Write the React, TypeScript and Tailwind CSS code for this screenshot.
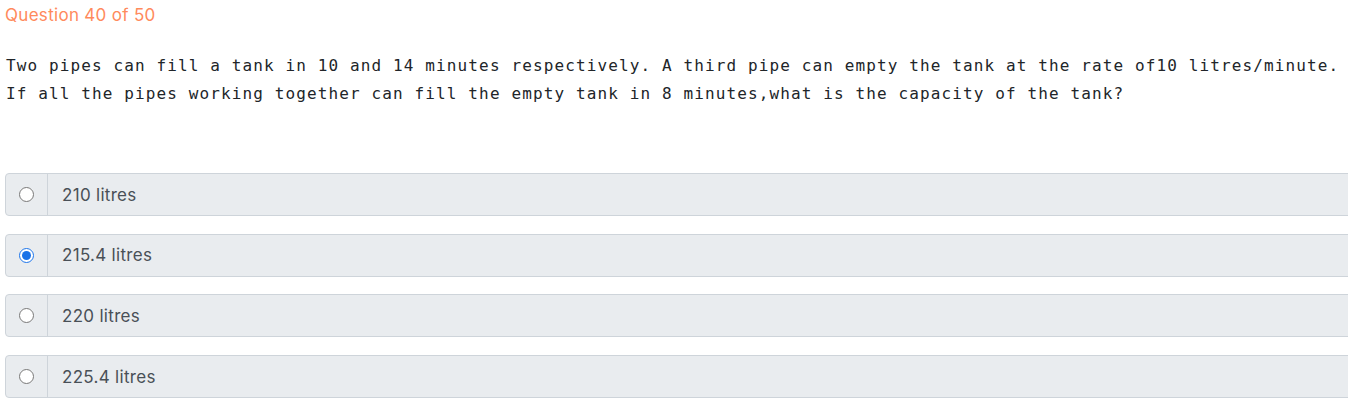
import { useState } from "react";

const options = ["210 litres", "215.4 litres", "220 litres", "225.4 litres"];

const App = () => {
  const [picked, setPicked] = useState(1);

  return (
    <div className="w-full h-[416px] overflow-hidden bg-white font-['Inter',sans-serif]">
      <div className="pl-[5px] pt-[5px]">
        <p className="text-[17px] leading-[21px] text-[#ff8a5c] tracking-[0.3px]">
          Question 40 of 50
        </p>

        <div className="mt-[26px] pl-[1px] font-['DejaVu_Sans_Mono',monospace] text-[16px] leading-[28px] tracking-[1.12px] text-[#212529] whitespace-nowrap">
          <p>
            Two pipes can fill a tank in 10 and 14 minutes respectively. A third pipe can empty the tank at the rate of10 litres/minute.
          </p>
          <p>If all the pipes working together can fill the empty tank in 8 minutes,what is the capacity of the tank?</p>
        </div>

        <div className="mt-[65px] flex flex-col gap-[17.6px] w-[1380px]">
          {options.map((opt, i) => (
            <label
              key={opt}
              className="flex h-[43px] border border-[#ced4da] rounded-[4px] bg-[#e9ecef] cursor-pointer"
            >
              <span className="w-[42px] shrink-0 flex items-center justify-center border-r border-[#ced4da]">
                <input
                  type="radio"
                  name="answer"
                  checked={picked === i}
                  onChange={() => setPicked(i)}
                  className="w-[15px] h-[15px] m-0 accent-[#1a73e8]"
                />
              </span>
              <span className="flex items-center pl-[14px] pt-[2px] text-[17px] tracking-[0.3px] text-[#495057]">{opt}</span>
            </label>
          ))}
        </div>
      </div>
    </div>
  );
};

export default App;
